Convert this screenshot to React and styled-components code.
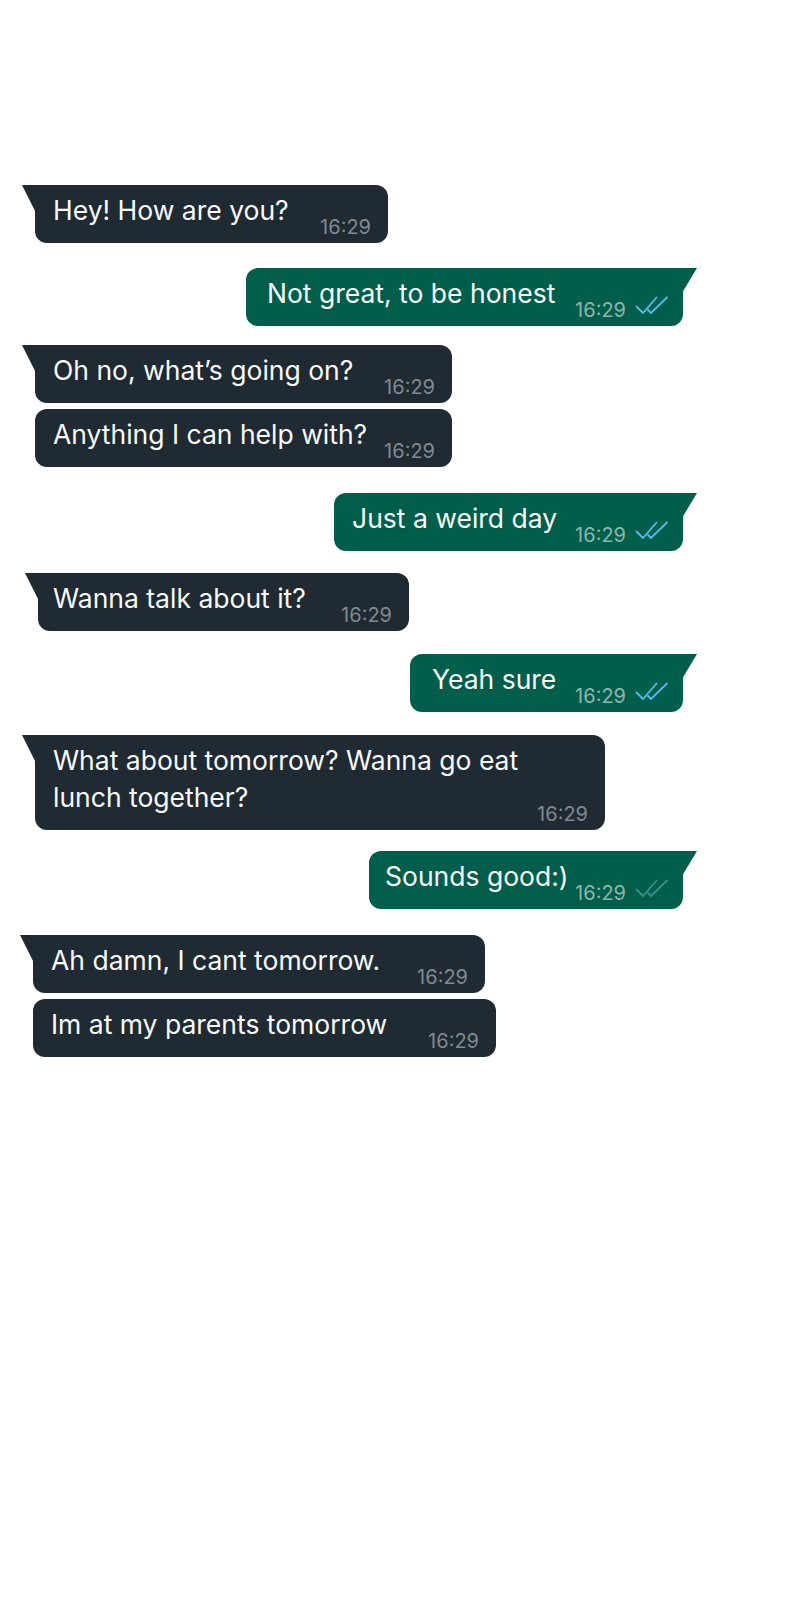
import React from "react";
import styled, { createGlobalStyle, css } from "styled-components";

const GlobalStyle = createGlobalStyle`
  html, body {
    margin: 0;
    padding: 0;
    background: #ffffff;
  }
  body {
    font-family: Inter, "Noto Sans", "Liberation Sans", sans-serif;
    -webkit-font-smoothing: antialiased;
  }
`;

const Page = styled.main`
  min-height: 1600px;
  box-sizing: border-box;
  padding: 185px 0 0 0;
  display: flex;
  flex-direction: column;
`;

const Row = styled.div`
  display: flex;
  justify-content: ${(p) => (p.$out ? "flex-end" : "flex-start")};
  margin-top: ${(p) => p.$gap}px;
  padding-left: ${(p) => (p.$out ? 0 : 35 + (p.$shift || 0))}px;
  padding-right: ${(p) => (p.$out ? 106 : 0)}px;
`;

const Bubble = styled.div`
  position: relative;
  box-sizing: border-box;
  width: ${(p) => p.$width}px;
  display: flex;
  align-items: flex-end;
  justify-content: space-between;
  padding: 7px ${(p) => (p.$out ? 14 : 17)}px 7px ${(p) => 18 + (p.$indent || 0)}px;
  background: ${(p) => (p.$out ? "#005e4b" : "#1f2a33")};
  border-radius: 12px;
  ${(p) =>
    p.$tail &&
    !p.$out &&
    css`
      border-top-left-radius: 0;
      &::before {
        content: "";
        position: absolute;
        top: 0;
        left: -13px;
        width: 14px;
        height: 28px;
        background: inherit;
        clip-path: polygon(0 0, 100% 0, 100% 100%);
      }
    `}
  ${(p) =>
    p.$tail &&
    p.$out &&
    css`
      border-top-right-radius: 0;
      &::before {
        content: "";
        position: absolute;
        top: 0;
        right: -14px;
        width: 15px;
        height: 25px;
        background: inherit;
        clip-path: polygon(0 0, 100% 0, 0 100%);
      }
    `}
`;

const Text = styled.div`
  color: #f9fafb;
  font-size: 26.5px;
  line-height: 37px;
  white-space: pre;
  margin-bottom: 7px;
`;

const Meta = styled.div`
  display: flex;
  align-items: flex-end;
  gap: 9px;
  flex-shrink: 0;
`;

const Time = styled.span`
  font-size: 20px;
  line-height: 18px;
  color: ${(p) => (p.$out ? "#8fb5ac" : "#80898f")};
`;

const Ticks = styled.svg`
  display: block;
  width: 34px;
  height: 18px;
  margin-bottom: 5px;
  color: ${(p) => (p.$read ? "#53bdeb" : "#3f8d89")};
`;

function DoubleCheck({ read }) {
  return (
    <Ticks $read={read} viewBox="0 0 34 18" fill="none">
      <path d="M1 10 L8 17 L22 1" stroke="currentColor" strokeWidth="1.8" />
      <path d="M12.5 13.5 L16 17 L32.5 1" stroke="currentColor" strokeWidth="1.8" />
    </Ticks>
  );
}

const messages = [
  { id: 1, out: false, text: "Hey! How are you?", width: 353, gap: 0, tail: true },
  { id: 2, out: true, text: "Not great, to be honest", width: 437, gap: 25, tail: true, read: true, indent: 3 },
  { id: 3, out: false, text: "Oh no, what\u2019s going on?", width: 417, gap: 19, tail: true },
  { id: 4, out: false, text: "Anything I can help with?", width: 417, gap: 6, tail: false },
  { id: 5, out: true, text: "Just a weird day", width: 349, gap: 26, tail: true, read: true },
  { id: 6, out: false, text: "Wanna talk about it?", width: 371, gap: 22, tail: true, shift: 3, indent: -3 },
  { id: 7, out: true, text: "Yeah sure", width: 273, gap: 23, tail: true, read: true, indent: 4 },
  {
    id: 8,
    out: false,
    text: "What about tomorrow? Wanna go eat\nlunch together?",
    width: 570,
    gap: 23,
    tail: true,
  },
  { id: 9, out: true, text: "Sounds good:)", width: 314, gap: 21, tail: true, read: false, indent: -2 },
  { id: 10, out: false, text: "Ah damn, I cant tomorrow.", width: 452, gap: 26, tail: true, shift: -2 },
  { id: 11, out: false, text: "Im at my parents tomorrow", width: 463, gap: 6, tail: false, shift: -2 },
];

export default function App() {
  return (
    <>
      <GlobalStyle />
      <Page>
        {messages.map((m) => (
          <Row key={m.id} $out={m.out} $gap={m.gap} $shift={m.shift}>
            <Bubble $out={m.out} $tail={m.tail} $width={m.width} $indent={m.indent}>
              <Text>{m.text}</Text>
              <Meta>
                <Time $out={m.out}>16:29</Time>
                {m.out && <DoubleCheck read={m.read} />}
              </Meta>
            </Bubble>
          </Row>
        ))}
      </Page>
    </>
  );
}
